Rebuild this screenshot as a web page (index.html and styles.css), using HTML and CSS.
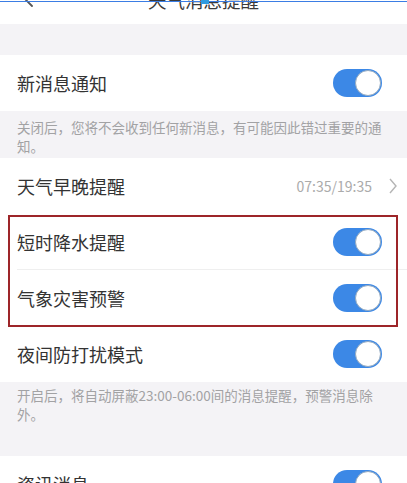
FILE: index.html
```html
<!DOCTYPE html>
<html lang="zh">
<head>
<meta charset="utf-8">
<link rel="stylesheet" href="styles.css">
</head>
<body>
<div class="screen">
  <div class="rec-line"><span class="rec-dot"></span></div>
  <header class="header">
    <svg class="back" width="16" height="24" viewBox="0 0 16 24"><path d="M12 2 L3 11 L12 20" stroke="#555" stroke-width="1.8" fill="none" stroke-linecap="round" stroke-linejoin="round"/></svg>
    <div class="title">天气消息提醒</div>
  </header>
  <div class="gap"></div>

  <div class="row">
    <span class="label">新消息通知</span>
    <span class="toggle"><span class="knob"></span></span>
  </div>
  <div class="desc">关闭后，您将不会收到任何新消息，有可能因此错过重要的通知。</div>

  <div class="row">
    <span class="label">天气早晚提醒</span>
    <span class="meta">07:35/19:35</span>
    <svg class="chev" width="10" height="18" viewBox="0 0 10 18"><path d="M2 2 L8 9 L2 16" stroke="#b5b5b5" stroke-width="1.4" fill="none"/></svg>
  </div>

  <div class="highlight">
    <div class="row sep">
      <span class="label">短时降水提醒</span>
      <span class="toggle"><span class="knob"></span></span>
    </div>
    <div class="row">
      <span class="label">气象灾害预警</span>
      <span class="toggle"><span class="knob"></span></span>
    </div>
  </div>

  <div class="row">
    <span class="label">夜间防打扰模式</span>
    <span class="toggle"><span class="knob"></span></span>
  </div>
  <div class="desc desc-tall">开启后，将自动屏蔽23:00-06:00间的消息提醒，预警消息除外。</div>

  <div class="row">
    <span class="label">资讯消息</span>
    <span class="toggle"><span class="knob"></span></span>
  </div>
</div>
</body>
</html>
```
FILE: styles.css
```css
* { box-sizing: border-box; }
html, body { margin: 0; padding: 0; }
body {
  background: #ffffff;
  font-family: "Noto Sans CJK SC", "Noto Sans", sans-serif;
  color: #333333;
  overflow: hidden;
}
.screen {
  position: relative;
  width: 407px;
  height: 483px;
  overflow: hidden;
}
.rec-line {
  position: absolute;
  left: 0; right: 0; top: 1px;
  height: 1px;
  background: #3b7de4;
  z-index: 5;
}
.rec-dot {
  position: absolute;
  left: 201px; top: -1px;
  width: 8px; height: 4px;
  background: #2f9be0;
}
.header {
  height: 24px;
  background: #ffffff;
  display: flex;
  justify-content: center;
  position: relative;
}
.back {
  position: absolute;
  left: 20px;
  top: -14px;
}
.title {
  font-size: 18.5px;
  line-height: 18px;
  margin-top: -9px;
  color: #3a3a3a;
}
.gap {
  height: 31px;
  background: #f4f3f6;
}
.row {
  height: 56px;
  background: #ffffff;
  display: flex;
  align-items: center;
  padding: 0 25px 0 17px;
}
.label {
  font-size: 18px;
  color: #333333;
  flex: 1;
}
.toggle {
  position: relative;
  width: 49px;
  height: 28px;
  border-radius: 14px;
  background: #3c88e6;
}
.knob {
  position: absolute;
  right: 1px;
  top: 1px;
  width: 26px;
  height: 26px;
  border-radius: 50%;
  background: #ffffff;
  border: 1px solid #93a9bf;
}
.desc {
  background: #f4f3f6;
  font-size: 13.5px;
  line-height: 18.5px;
  color: #a2a2a4;
  padding: 7px 20px 3px 17px;
  height: 47px;
}
.desc-tall {
  height: 74px;
  padding-top: 4px;
}
.meta {
  font-size: 14px;
  color: #ababab;
  margin-right: 16px;
}
.chev { margin-right: -16px; }
.highlight {
  position: relative;
}
.highlight::after {
  content: "";
  position: absolute;
  left: 8px; right: 9px; top: 1px; bottom: -1px;
  border: 2.5px solid #9d2529;
  pointer-events: none;
}
.sep {
  position: relative;
}
.sep::after {
  content: "";
  position: absolute;
  left: 17px; right: 0; bottom: 0;
  height: 1px;
  background: #efefef;
}
```
